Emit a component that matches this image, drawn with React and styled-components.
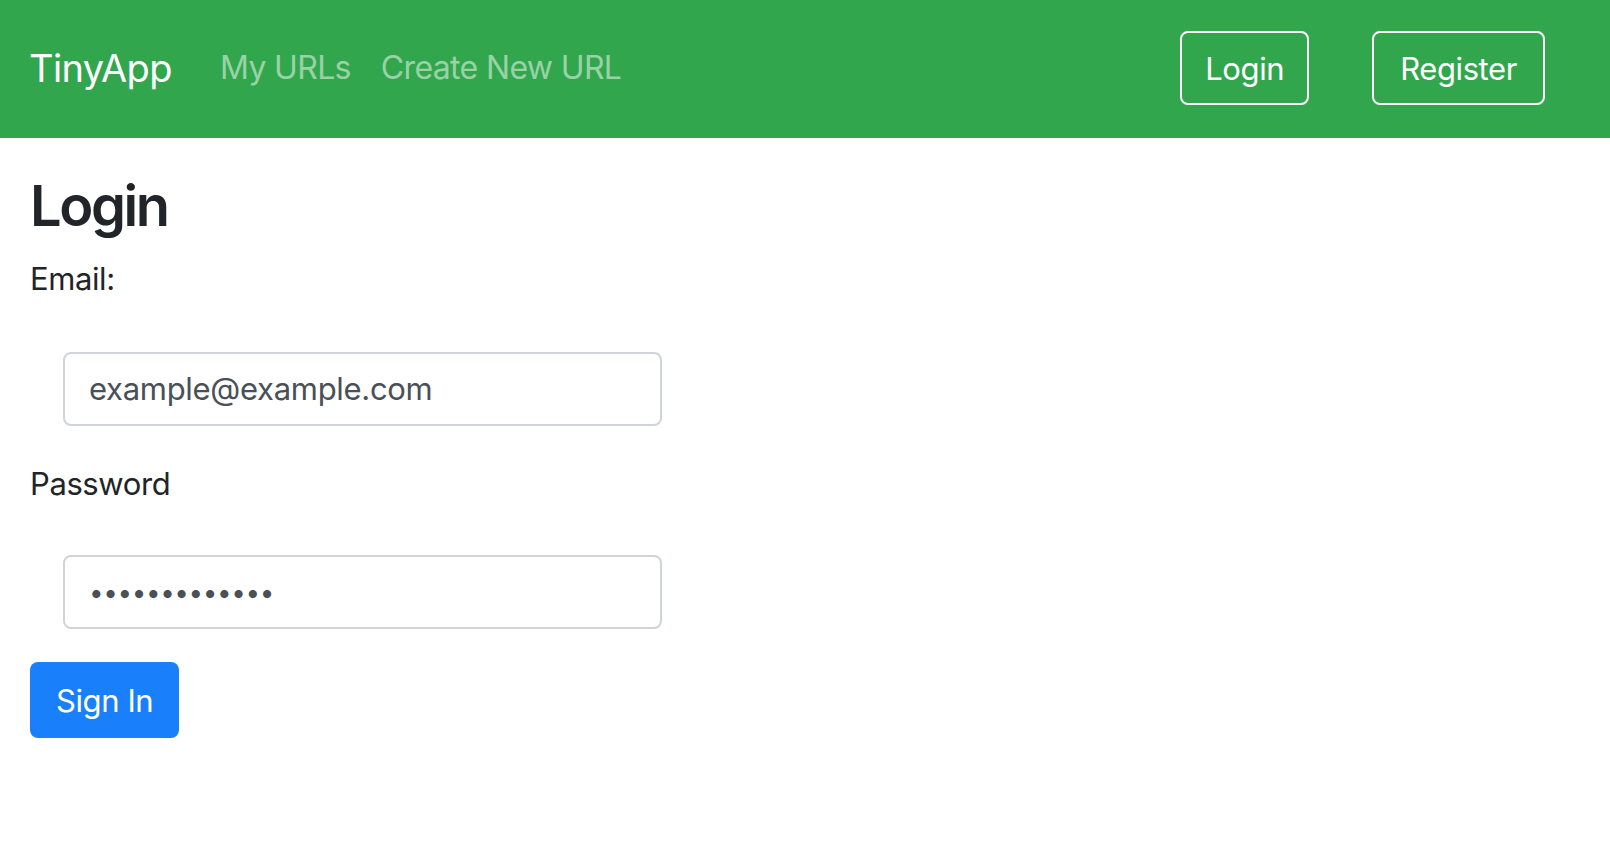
import React from "react";
import styled, { createGlobalStyle } from "styled-components";

const GlobalStyle = createGlobalStyle`
  html, body { margin: 0; padding: 0; background: #ffffff; }
  body {
    font-family: Inter, "Noto Sans", "Liberation Sans", sans-serif;
    font-size: 31px;
    line-height: 1.5;
    letter-spacing: -0.4px;
    color: #212529;
  }
  * { box-sizing: border-box; }
`;

const NavBar = styled.nav`
  display: flex;
  align-items: center;
  height: 138px;
  padding: 0 65px 2px 29px;
  background: #31a64d;
`;

const Brand = styled.a`
  font-size: 38px;
  letter-spacing: -0.6px;
  color: #ffffff;
  text-decoration: none;
  margin-right: 48px;
  white-space: nowrap;
`;

const NavLinks = styled.div`
  display: flex;
  align-items: center;
  gap: 30px;
  flex: 1;
`;

const NavLink = styled.a`
  font-size: 32px;
  letter-spacing: -0.65px;
  color: rgba(255, 255, 255, 0.5);
  text-decoration: none;
  white-space: nowrap;
`;

const NavActions = styled.div`
  display: flex;
  align-items: center;
  gap: 63px;
`;

const OutlineButton = styled.button`
  height: 74px;
  padding: 0 ${(p) => p.$px}px;
  font-family: inherit;
  font-size: 31px;
  letter-spacing: -0.4px;
  color: #ffffff;
  background: transparent;
  border: 2px solid #ffffff;
  border-radius: 8px;
  cursor: pointer;
`;

const Main = styled.main`
  padding: 0 30px;
`;

const Title = styled.h1`
  margin: 35px 0 16px;
  font-size: 56px;
  font-weight: 600;
  letter-spacing: -2.4px;
  line-height: 1.2;
  color: #212529;
`;

const Form = styled.form`
  display: flex;
  flex-direction: column;
  align-items: flex-start;
`;

const Label = styled.label`
  display: block;
  font-size: 31px;
  line-height: 1.5;
`;

const Input = styled.input`
  display: block;
  width: 599px;
  height: 74px;
  margin: ${(p) => p.$mt}px 0 0 33px;
  padding: 0 24px;
  font-family: inherit;
  font-size: ${(p) => (p.type === "password" ? 26 : 31)}px;
  letter-spacing: ${(p) => (p.type === "password" ? "-0.4px" : "-0.3px")};
  color: #495057;
  background: #ffffff;
  border: 2px solid #ced4da;
  border-radius: 8px;
  outline: none;
`;

const Spacer = styled.div`
  height: ${(p) => p.$h}px;
`;

const PrimaryButton = styled.button`
  height: 76px;
  padding: 0 26px;
  font-family: inherit;
  font-size: 31px;
  letter-spacing: -0.4px;
  color: #ffffff;
  background: #1a7ffb;
  border: none;
  border-radius: 8px;
  cursor: pointer;
`;

export default function App() {
  return (
    <>
      <GlobalStyle />
      <NavBar>
        <Brand href="#">TinyApp</Brand>
        <NavLinks>
          <NavLink href="#">My URLs</NavLink>
          <NavLink href="#">Create New URL</NavLink>
        </NavLinks>
        <NavActions>
          <OutlineButton $px={23}>Login</OutlineButton>
          <OutlineButton $px={26}>Register</OutlineButton>
        </NavActions>
      </NavBar>
      <Main>
        <Title>Login</Title>
        <Form onSubmit={(e) => e.preventDefault()}>
          <Label htmlFor="email">Email:</Label>
          <Input id="email" type="email" $mt={49} defaultValue="example@example.com" />
          <Spacer $h={35} />
          <Label htmlFor="password">Password</Label>
          <Input id="password" type="password" $mt={48} defaultValue="passwordpassw" />
          <Spacer $h={33} />
          <PrimaryButton type="submit">Sign In</PrimaryButton>
        </Form>
      </Main>
    </>
  );
}
